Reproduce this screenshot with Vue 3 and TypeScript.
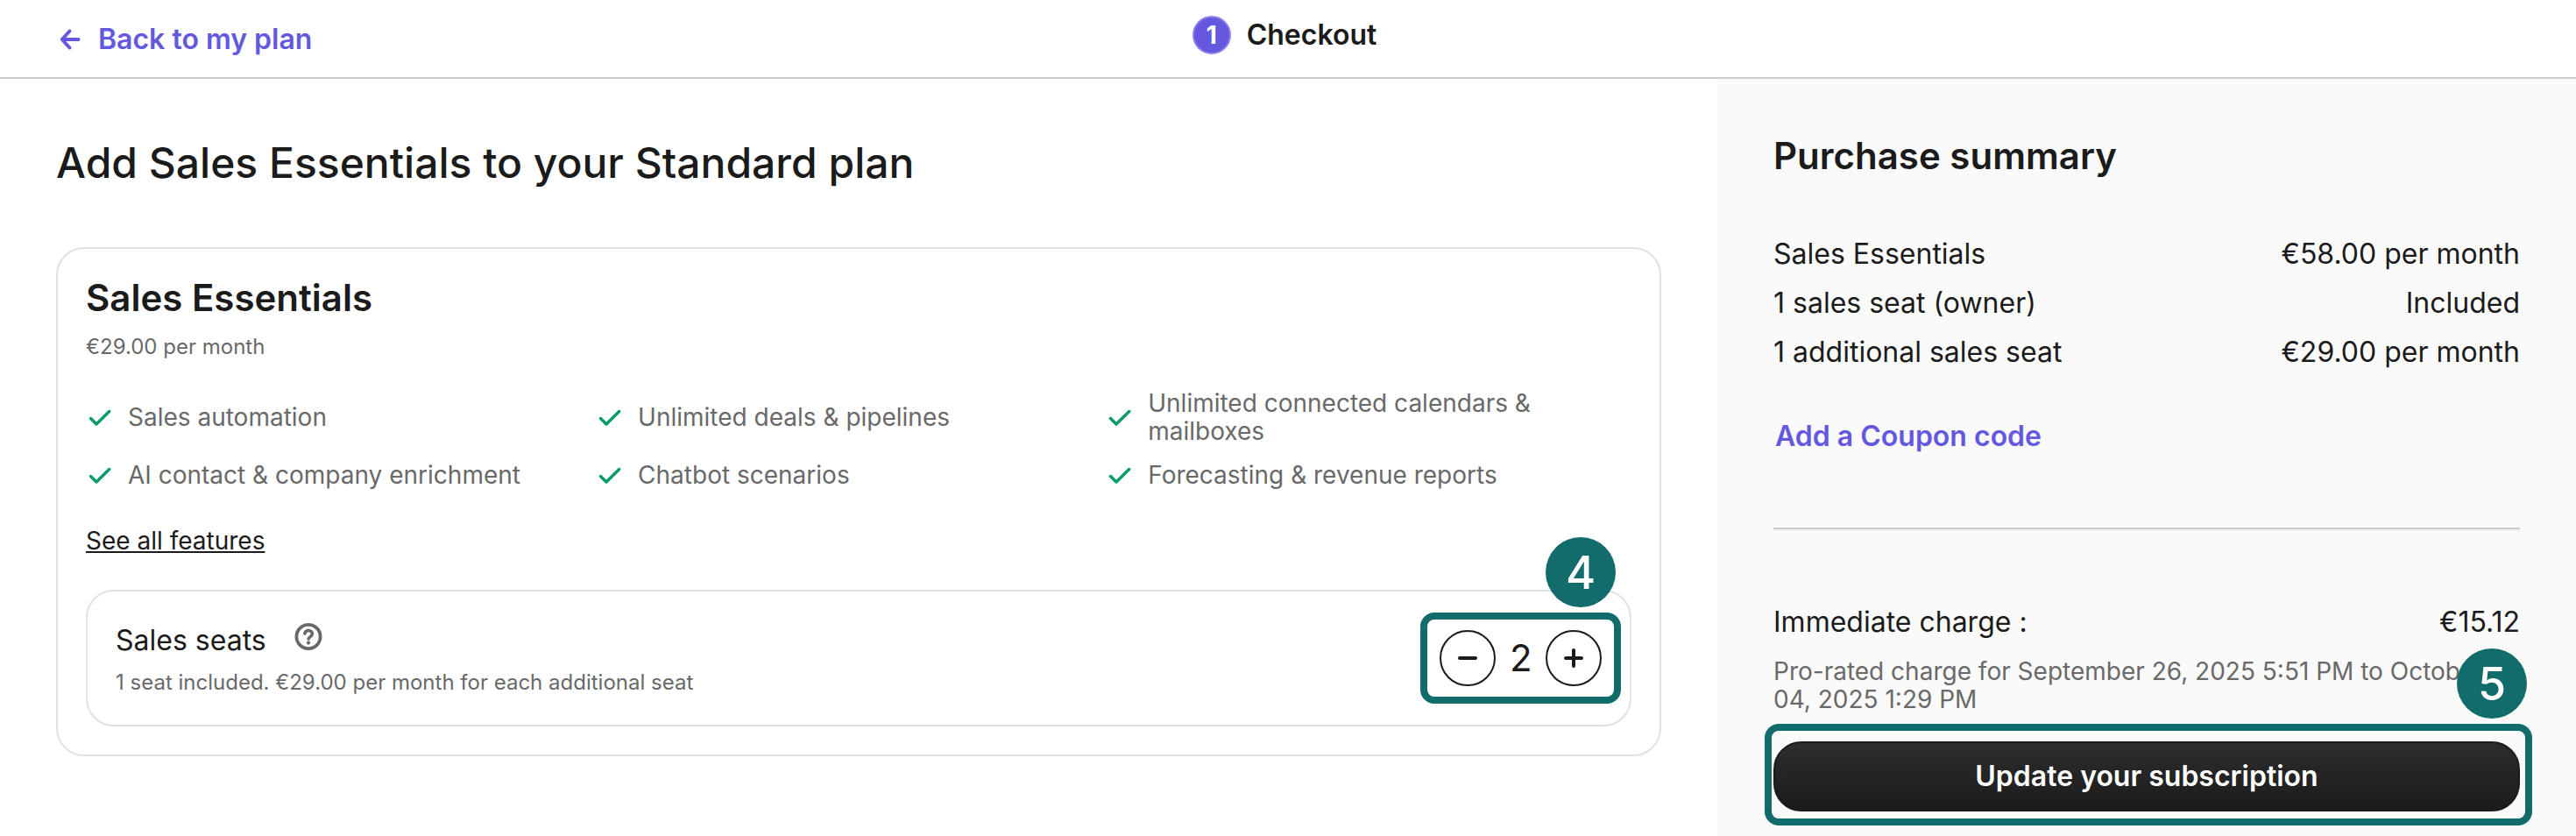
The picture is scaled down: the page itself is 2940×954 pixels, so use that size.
<script setup lang="ts">
import { ref } from 'vue'

const features: string[] = [
  'Sales automation',
  'Unlimited deals & pipelines',
  'Unlimited connected calendars & mailboxes',
  'AI contact & company enrichment',
  'Chatbot scenarios',
  'Forecasting & revenue reports',
]
const lines = [
  { label: 'Sales Essentials', value: '€58.00 per month' },
  { label: '1 sales seat (owner)', value: 'Included' },
  { label: '1 additional sales seat', value: '€29.00 per month' },
]
const seats = ref(2)
</script>

<template>
  <div class="page">
    <header class="topbar">
      <a class="back" href="#plan">
        <svg width="32" height="32" viewBox="0 0 32 32" fill="none" stroke="currentColor" stroke-width="4" stroke-linecap="round" stroke-linejoin="round" aria-hidden="true">
          <path d="M25.5 16H7M15.5 6.5L6.8 16l8.7 9.5" />
        </svg>
        Back to my plan
      </a>
      <div class="step"><span class="step-number">1</span>Checkout</div>
    </header>

    <div class="columns">
      <main class="main">
        <h1>Add Sales Essentials to your Standard plan</h1>
        <section class="card">
          <h2>Sales Essentials</h2>
          <p class="price">€29.00 per month</p>
          <ul class="features">
            <li v-for="feature in features" :key="feature">
              <svg width="32" height="32" viewBox="0 0 32 32" fill="none" stroke="currentColor" stroke-width="3.5" stroke-linecap="round" stroke-linejoin="round" aria-hidden="true">
                <path d="M5.5 17.5L12 24 26.7 9.5" />
              </svg>
              <span>{{ feature }}</span>
            </li>
          </ul>
          <a class="see-all" href="#features">See all features</a>
          <div class="seats">
            <div class="seats-text">
              <div class="seats-title">
                <span id="seats-label">Sales seats</span>
                <svg width="32" height="32" viewBox="0 0 32 32" fill="none" stroke="currentColor" stroke-linecap="round" role="img" aria-label="Help">
                  <circle cx="16" cy="15.5" r="13.6" stroke-width="3.8" />
                  <path d="M11.8 12c.6-2.4 2.4-3.5 4.3-3.5 2.4 0 4.3 1.6 4.3 3.8 0 3.4-4.3 3.2-4.3 6" stroke-width="3.6" />
                  <circle cx="16" cy="22.6" r="2.1" fill="currentColor" stroke="none" />
                </svg>
              </div>
              <p class="seats-note">1 seat included. €29.00 per month for each additional seat</p>
            </div>
            <div class="stepper" role="group" aria-labelledby="seats-label">
              <button type="button" aria-label="Remove seat" @click="seats = Math.max(1, seats - 1)">
                <svg width="24" height="24" viewBox="0 0 24 24" stroke="currentColor" stroke-width="4" stroke-linecap="round" aria-hidden="true"><path d="M3 12h18" /></svg>
              </button>
              <output>{{ seats }}</output>
              <button type="button" aria-label="Add seat" @click="seats++">
                <svg width="24" height="24" viewBox="0 0 24 24" stroke="currentColor" stroke-width="4" stroke-linecap="round" aria-hidden="true"><path d="M3 12h18M12 3v18" /></svg>
              </button>
              <span class="marker">4</span>
            </div>
          </div>
        </section>
      </main>

      <aside class="summary">
        <h2>Purchase summary</h2>
        <dl class="lines">
          <div v-for="line in lines" :key="line.label" class="line">
            <dt>{{ line.label }}</dt>
            <dd>{{ line.value }}</dd>
          </div>
        </dl>
        <button type="button" class="coupon">Add a Coupon code</button>
        <hr />
        <dl class="line">
          <dt>Immediate charge :</dt>
          <dd>€15.12</dd>
        </dl>
        <p class="prorated">Pro-rated charge for September 26, 2025 5:51 PM to October 04, 2025 1:29 PM</p>
        <div class="action">
          <button type="button" class="update">Update your subscription</button>
          <span class="marker">5</span>
        </div>
      </aside>
    </div>
  </div>
</template>

<style>
body {
  margin: 0;
  background: #fff;
}
</style>

<style scoped>
.page {
  display: flex;
  flex-direction: column;
  min-height: 100vh;
  font-family: Inter, "Liberation Sans", sans-serif;
  font-size: 32px;
  line-height: 40px;
  color: #1b1b1b;
}
.page * {
  box-sizing: border-box;
}
h1, h2, p, ul, dl, dd {
  margin: 0;
  padding: 0;
}
button {
  font: inherit;
  color: inherit;
  padding: 0;
  cursor: pointer;
}
svg {
  flex: none;
}
.topbar {
  display: grid;
  grid-template-columns: 1fr auto 1fr;
  height: 90px;
  padding: 0 64px;
  border-bottom: 2px solid #ccc;
}
.back {
  display: flex;
  align-items: center;
  justify-self: start;
  gap: 16px;
  padding-top: 2px;
  color: #6358de;
  font-weight: 600;
  text-decoration: none;
}
.step {
  display: flex;
  align-items: center;
  gap: 18px;
  height: 80px;
  padding-right: 8px;
  font-weight: 600;
}
.step-number {
  width: 44px;
  height: 44px;
  border-radius: 50%;
  background: #6358de;
  border: 2px solid #8f87e8;
  color: #fff;
  font-size: 28px;
  font-weight: 700;
  text-align: center;
}
.columns {
  display: grid;
  grid-template-columns: 2fr 1fr;
  flex: 1;
}
.main {
  padding: 64px;
}
h1 {
  font-size: 48px;
  line-height: 64px;
  font-weight: 500;
  margin-bottom: 64px;
}
h2 {
  font-size: 42px;
  line-height: 48px;
  font-weight: 600;
}
.card {
  border: 2px solid #e1e1e1;
  border-radius: 32px;
  padding: 32px;
}
.price {
  margin-top: 16px;
  font-size: 24px;
  line-height: 32px;
  color: #696969;
}
.features {
  display: grid;
  grid-template-columns: repeat(3, 33%);
  gap: 16px 0;
  margin: 32px 0 36px;
  list-style: none;
  font-size: 28px;
  line-height: 32px;
  color: #696969;
}
.features li {
  display: flex;
  align-items: center;
  gap: 16px;
  padding-right: 48px;
  min-height: 36px;
}
.features svg {
  color: #0b996e;
}
.see-all {
  display: inline-block;
  font-size: 28px;
  color: inherit;
}
.seats {
  display: flex;
  justify-content: space-between;
  align-items: center;
  margin-top: 36px;
  padding: 24px 10px 24px 32px;
  border: 2px solid #e1e1e1;
  border-radius: 32px;
}
.seats-text {
  padding-top: 4px;
}
.seats-title {
  display: flex;
  gap: 32px;
}
.seats-title svg {
  color: #696969;
}
.seats-note {
  margin-top: 12px;
  font-size: 24px;
  line-height: 32px;
  color: #696969;
}
.stepper {
  position: relative;
  display: flex;
  align-items: center;
  gap: 16px;
  padding: 12px 14px;
  border: 8px solid #116c6b;
  border-radius: 16px;
}
.stepper button {
  display: grid;
  place-items: center;
  width: 64px;
  height: 64px;
  border: 2px solid #1b1b1b;
  border-radius: 50%;
  background: none;
}
.stepper output {
  width: 25px;
  font-size: 42px;
  text-align: center;
}
.marker {
  position: absolute;
  right: -2px;
  bottom: calc(100% + 14px);
  width: 80px;
  height: 80px;
  border-radius: 50%;
  background: #116c6b;
  color: #fff;
  font-size: 52px;
  font-weight: 500;
  line-height: 82px;
  text-align: center;
}
.summary {
  padding: 64px 64px 12px;
  background: #fafafa;
}
.lines {
  display: grid;
  gap: 16px;
  margin-top: 68px;
}
.line {
  display: flex;
  justify-content: space-between;
}
.coupon {
  display: block;
  margin-top: 56px;
  padding: 0 2px;
  border: 0;
  background: none;
  color: #6358de;
  font-weight: 600;
}
hr {
  margin: 84px 0;
  border: solid;
  border-width: 2px 0;
  border-color: #ccc #eee #eee #999;
}
.prorated {
  margin-top: 20px;
  font-size: 28px;
  line-height: 32px;
  color: #696969;
}
.action {
  position: relative;
  margin: 12px -14px 0 -10px;
  padding: 12px 6px 8px 2px;
  border: 8px solid #116c6b;
  border-radius: 16px;
}
.update {
  display: block;
  width: 100%;
  height: 80px;
  border: 2px solid #1b1b1b;
  border-radius: 32px;
  background: linear-gradient(#2d2d2d, #1b1b1b);
  color: #fff;
  font-weight: 600;
}
</style>
